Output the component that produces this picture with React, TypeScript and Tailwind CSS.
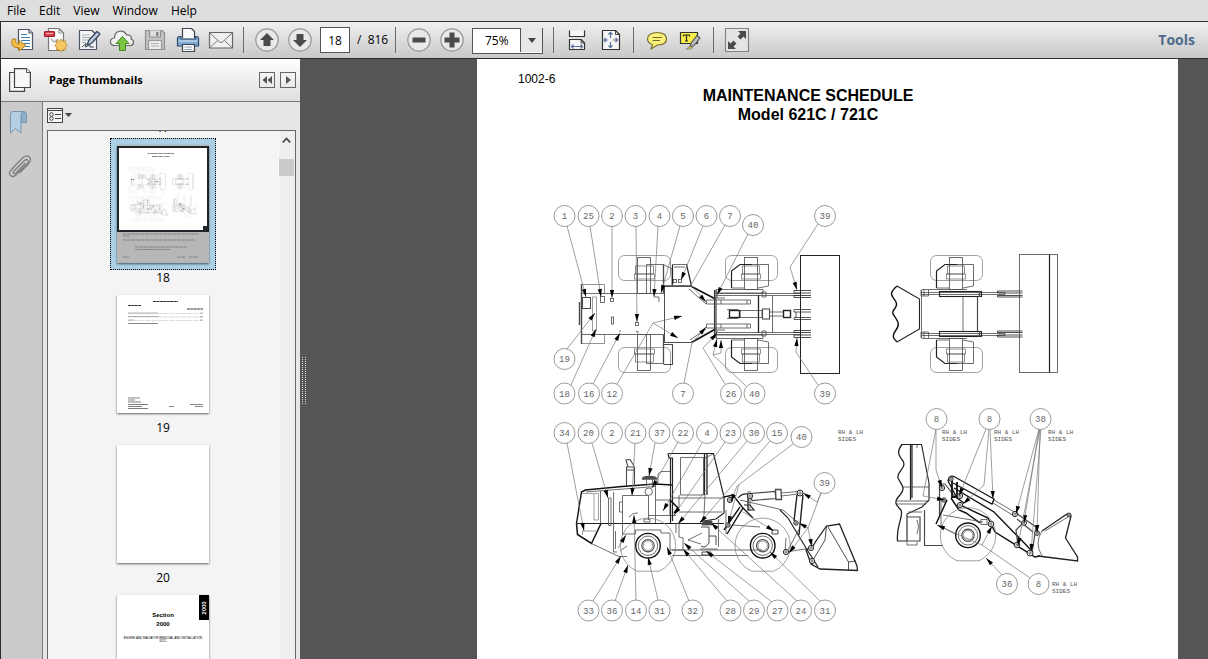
import React from "react";

type Pt = [number, number];

/* ---------- Drawing primitives ---------- */

const pts = (list: Pt[]) => list.map((p) => p.join(",")).join(" ");

/** Thin leader line that ends in a filled arrowhead. */
function Leader({ path, plain = false }: { path: Pt[]; plain?: boolean }) {
  const [x2, y2] = path[path.length - 1];
  const [x1, y1] = path[path.length - 2];
  const len = Math.hypot(x2 - x1, y2 - y1) || 1;
  const ux = (x2 - x1) / len;
  const uy = (y2 - y1) / len;
  const bx = x2 - ux * 8;
  const by = y2 - uy * 8;
  const head: Pt[] = [
    [x2, y2],
    [bx - uy * 2.1, by + ux * 2.1],
    [bx + uy * 2.1, by - ux * 2.1],
  ];
  return (
    <g>
      <polyline points={pts(path)} stroke="#777" strokeWidth={0.7} fill="none" />
      {!plain && <polygon points={pts(head)} fill="#000" stroke="none" />}
    </g>
  );
}

const callouts: [number, number, string][] = [
  [564.5, 216, "1"], [588.5, 216, "25"], [612, 216, "2"], [635.5, 216, "3"], [659.5, 216, "4"],
  [683, 216, "5"], [706.5, 216, "6"], [730, 216, "7"], [753, 225, "40"], [825, 216, "39"],
  [564.5, 359, "19"], [564.5, 393.5, "18"], [589, 393.5, "16"], [612, 393.5, "12"], [683, 393.5, "7"],
  [731, 393.5, "26"], [754.5, 393.5, "40"], [825, 393.5, "39"],
  [564.5, 433, "34"], [588.5, 433, "20"], [612, 433, "2"], [635.5, 433, "21"], [659.5, 433, "37"],
  [683, 433, "22"], [707, 433, "4"], [730.5, 433, "23"], [754, 433, "30"], [777, 433, "15"],
  [801.5, 437, "40"], [824.5, 483, "39"],
  [588.5, 610.5, "33"], [612, 610.5, "36"], [636, 610.5, "14"], [659.5, 610.5, "31"], [692.5, 610.5, "32"],
  [730.5, 610.5, "28"], [754, 610.5, "29"], [777.5, 610.5, "27"], [801, 610.5, "24"], [825, 610.5, "31"],
  [936.5, 419, "8"], [989.5, 419, "8"], [1040.5, 419, "38"], [1007, 584, "36"], [1038.5, 584, "8"],
];

const sideNotes: Pt[] = [
  [838, 434], [942, 434], [994, 434], [1048, 434], [1052, 586],
];

const leaders: Pt[][] = [
  [[567, 226], [586, 297]],
  [[590, 226], [601, 297]],
  [[612, 226], [612, 298]],
  [[636, 226], [637, 322]],
  [[658, 226], [654, 297]],
  [[680, 226], [661, 293]],
  [[703, 226], [681, 280]],
  [[725, 225], [691, 285], [706, 302]],
  [[748, 234], [717, 295]],
  [[818, 224], [790, 267], [797, 290]],
  [[567, 349], [595, 313]],
  [[571, 385], [596, 329]],
  [[593, 384], [620, 333]],
  [[617, 384], [653, 323], [682, 316]],
  [[653, 323], [678, 338]],
  [[684, 383], [692, 343], [706, 327]],
  [[725, 384], [703, 348], [717, 333]],
  [[746, 386], [713, 355], [717, 339]],
  [[713, 355], [721, 353], [721, 340]],
  [[818, 385], [796, 352], [797, 338]],
  [[567, 443], [584, 531]],
  [[592, 443], [608, 498]],
  [[635, 443], [632, 496]],
  [[655, 443], [649, 476]],
  [[678, 442], [652, 488]],
  [[702, 443], [663, 511]],
  [[725, 442], [674, 515]],
  [[747, 441], [678, 524]],
  [[770, 441], [700, 523]],
  [[793, 444], [737, 486], [731, 502]],
  [[739, 485], [728, 524]],
  [[821, 493], [817, 502], [803, 493]],
  [[821, 493], [808, 528], [789, 553]],
  [[808, 528], [799, 523]],
  [[808, 528], [812, 547]],
  [[743, 512], [774, 531]],
  [[593, 601], [621, 556]],
  [[618, 548], [626, 535]],
  [[615, 601], [628, 565]],
  [[636, 600], [634, 515]],
  [[658, 600], [648, 557]],
  [[689, 601], [667, 547]],
  [[727, 601], [683, 549]],
  [[749, 601], [684, 543]],
  [[772, 602], [706, 551]],
  [[797, 601], [711, 523]],
  [[820, 601], [770, 552]],
  [[936, 429], [936, 470], [942, 488]],
  [[936, 429], [923, 496], [945, 500]],
  [[986, 429], [959, 496]],
  [[990, 429], [993, 499]],
  [[989, 429], [984, 485], [963, 504]],
  [[1039, 429], [1016, 514]],
  [[1039, 429], [1024, 523]],
  [[1040, 429], [1037, 533]],
  [[1040, 429], [1018, 546]],
  [[1041, 429], [1031, 552]],
  [[1002, 575], [986, 558]],
  [[1030, 578], [982, 545], [992, 526]],
  [[982, 545], [937, 525]],
];

/** Upper half of the front axle as seen from above; mirrored for the lower half. */
function AxleHalf() {
  return (
    <g>
      <rect x={725.5} y={255.5} width={52} height={25} rx={6} stroke="#888" />
      <rect x={744.5} y={257.5} width={13} height={32} />
      <rect x={742.5} y={266} width={17} height={8} strokeWidth={0.6} />
      <rect x={741.5} y={274} width={19} height={5} strokeWidth={0.6} />
      <path d="M731.5 288V271L740 264.5H752" stroke="#222" strokeWidth={1.2} />
      <path d="M752 264.5H768.5V286L758 288M731.5 288H744" />
    </g>
  );
}

function Mirror({ children }: { children: React.ReactNode }) {
  return <g transform="translate(0 628) scale(1 -1)">{children}</g>;
}

function RearHalf() {
  return (
    <g>
      <rect x={618.5} y={255.5} width={52} height={25} rx={6} stroke="#888" />
      <rect x={637.5} y={257.5} width={13} height={36} />
      <rect x={635.5} y={266} width={18} height={8} strokeWidth={0.6} />
      <rect x={634.5} y={274} width={20} height={5} strokeWidth={0.6} />
      <path d="M646.5 293V264.5H663.5V293" />
      <path d="M663.5 264.5V293" strokeWidth={1.3} />
    </g>
  );
}

function BracketHalf() {
  return (
    <g>
      <path d="M716 289.5H763V293H716Z" />
      <path d="M716 293.5H801M716 295.5H801" />
      <path d="M717 296V298H725M762 292V297H766V292Z" />
      <path d="M811 290.5H794V293H811M811 295.5H794V297.5H811" stroke="#222" />
      <path d="M706.5 300H750.5V304H706.5ZM721 300V304M747 300V304" />
    </g>
  );
}

function TopView() {
  return (
    <g>
      <path d="M581.5 284.5H604.5V293.5M581.5 343.5H604.5V335" stroke="#777" />
      <path d="M581.5 284V344" strokeWidth={1.4} />
      <path d="M579.5 302V325" strokeWidth={1.4} />
      <path d="M581.5 293.5H664.5M581.5 334.5H664.5" />
      <rect x={582.5} y={297.5} width={8} height={11} strokeWidth={1} />
      <rect x={592.5} y={297} width={4} height={34} stroke="#888" />
      <rect x={600.5} y={296.5} width={4} height={6} />
      <rect x={610.5} y={298.5} width={3} height={3} />
      <rect x={611.5} y={317} width={2} height={7} />
      <rect x={635.5} y={322.5} width={3} height={3} />
      <path d="M636 331.5h2v2M619 331h2M654 297H659V302" />
      <RearHalf />
      <Mirror><RearHalf /></Mirror>
      <path d="M663.5 264.5L672 269V285M663.5 285.5H692M672.5 264.5H686.5M674 267H685" />
      <path d="M686.5 264.5L691.5 286M672.5 264.5V285" stroke="#222" strokeWidth={1.2} />
      <path d="M663.5 344.5H672.5V364.5H663.5" strokeWidth={1.1} />
      <rect x={673.5} y={279.5} width={3} height={3} />
      <rect x={678.5} y={279.5} width={3} height={3} />
      <path d="M664.5 286.5H691.5M664.5 342.5H691.5M664.5 286.5V342.5" stroke="#222" />
      <path d="M691.5 286.5L715.5 299M715.5 329L691.5 342.5" stroke="#111" strokeWidth={1.6} />
      <path d="M689 289L706 304M690 340L706 329" />
      <path d="M714.5 290V338M716 290V338" strokeWidth={1.1} stroke="#333" />
      <AxleHalf />
      <Mirror><AxleHalf /></Mirror>
      <BracketHalf />
      <Mirror><BracketHalf /></Mirror>
      <path d="M758.5 295V333" stroke="#222" strokeWidth={1.3} />
      <path d="M772.5 295V333" />
      <rect x={740} y={310.5} width={22} height={7} />
      <rect x={729.5} y={310.5} width={10} height={7} stroke="#222" strokeWidth={1.4} />
      <path d="M727 309.5H738M727 318.5H738" />
      <rect x={762.5} y={309} width={7} height={10} strokeWidth={1.1} />
      <path d="M770 312H783M770 316H783" />
      <rect x={783.5} y={310.5} width={7} height={7} stroke="#222" strokeWidth={1.4} />
      <path d="M811 309.5H794V312H811M811 317.5H794V319.5H811M796 312V317.5" stroke="#333" />
      <rect x={800.5} y={255.5} width={39} height={118} stroke="#222" strokeWidth={1} />
    </g>
  );
}

function FrontArmHalf() {
  return (
    <g>
      <path d="M921.5 289.5H967M921.5 292.5H1005V294.5H921.5" />
      <rect x={939.5} y={291.5} width={42} height={5} stroke="#222" strokeWidth={1.1} />
      <path d="M979.5 291V297" strokeWidth={1.5} />
      <path d="M921 290V296H928.5V290M924 290V296" />
      <path d="M1022.5 291H997.5V293H1022.5M1022.5 295.5H997.5V297H1022.5" stroke="#222" />
    </g>
  );
}

function FrontTopView() {
  return (
    <g>
      <path d="M897 286C887 295 893 296 896 302C899 308 891 309 893 314C897 320 901 324 896 330C891 337 894 339 897 342" stroke="#111" strokeWidth={1.4} />
      <path d="M897 286L919.5 299V329L897 342" stroke="#222" strokeWidth={1.1} />
      <path d="M921.5 290V338M963 297V331" />
      <path d="M977.5 297V331" strokeWidth={1.2} />
      <g transform="translate(205 0)">
        <AxleHalf />
        <Mirror><AxleHalf /></Mirror>
      </g>
      <FrontArmHalf />
      <Mirror><FrontArmHalf /></Mirror>
      <rect x={1019.5} y={254.5} width={38} height={118} />
      <path d="M1049.5 254.5V372.5" stroke="#222" strokeWidth={1.2} />
    </g>
  );
}

function Tyre({ x, y }: { x: number; y: number }) {
  return (
    <g transform={`translate(${x} ${y})`}>
      <path d="M-11 25.5A27.7 27.7 0 1 1 11 25.5Z" stroke="#888" />
      <circle r={12.3} stroke="#111" strokeWidth={1.4} />
      <circle r={9.7} />
      <circle r={6.2} strokeWidth={1.1} />
      <circle r={4.8} strokeWidth={0.6} />
    </g>
  );
}

function Pin({ x, y, r = 2.2 }: { x: number; y: number; r?: number }) {
  return (
    <g>
      <circle cx={x} cy={y} r={r} fill="#fff" stroke="#222" strokeWidth={1} />
      <circle cx={x} cy={y} r={r / 2.5} />
    </g>
  );
}

function SideView() {
  return (
    <g>
      <path d="M576.5 523.5L581.5 492L585.5 490L622 486.5L655 484L672 485" stroke="#111" strokeWidth={1.4} />
      <path d="M586 492L655 486.5" />
      <path d="M576.5 523.5L577.5 534.5L591.5 543.5L601 523.5" stroke="#111" strokeWidth={1.5} />
      <path d="M576.5 523.5H724" stroke="#222" strokeWidth={1.1} />
      <path d="M591.5 543.5L619 556.5H627M600.5 491V523" />
      <path d="M582.5 493.5H598.5V520H594V494M582.5 535V531H596" stroke="#888" />
      <path d="M608.5 498V525.5H611V498ZM613.5 492V552H617M615.5 531V549" />
      <path d="M622.5 535V495.5H648.5V520M619.5 502H622M619.5 502V512H622" />
      <path d="M622.5 534H635.5V530H661V533H670V550H683V538L679 537V523M648.5 515.5H676" />
      <path d="M644 519V522H650V519Z" />
      <path d="M627 546L620 551M629 517Q633 512 638 513" />
      <path d="M626.5 486V467H634.5V486M628 467L626 460L630 459.5L634 466M627 470H634" strokeWidth={1.1} />
      <path d="M642.5 479C642.5 475.5 656.5 475.5 656.5 479Z" fill="#555" strokeWidth={1.3} />
      <path d="M646.5 479.5V484.5H652.5V479.5" />
      <circle cx={648.7} cy={491.7} r={3.7} fill="#fff" />
      <path d="M658 483V474L661 471.5H670M655.5 485V523M655.5 500H670V515" />
      <path d="M668.5 453.5H713.5L724 497V513L716 519L700 521.5" stroke="#222" strokeWidth={1.2} />
      <path d="M668 453.5L669 458H673M670.5 458V523M672.5 458V521" stroke="#222" strokeWidth={1.2} />
      <path d="M680.5 457.5H703.5V495H680.5Z" />
      <path d="M671.5 498H724M679 512H722M679 495V508M705 495L704 515" />
      <path d="M704.5 454V495M707 454V495" stroke="#222" strokeWidth={1.3} />
      <path d="M713 454L705 458" />
      <path d="M670 500L678 508L674 513" stroke="#111" strokeWidth={1.6} />
      <path d="M718.5 519V547M700 549H718M672 550H762M672 555.5H748" />
      <path d="M676 523V533M688 540L702 533M688 540L701 544" />
      <path d="M702 523Q706 519 712 521V525H702Z" fill="#444" />
      <path d="M701 527H709V543Q705 549 701 546M709 536H716M716 536V545M702 552H711V555H702Z" strokeWidth={1} />
      <Tyre x={648} y={545.7} />
      <Tyre x={762.7} y={545.7} />
      <path d="M724 497L733 495L743 508L727 534M740 507L724 530M743 508L753 518" stroke="#111" strokeWidth={1.4} />
      <path d="M726 510V534M733 525L760 527M740 500L783 510L797 522" />
      <path d="M738 498Q742 493 748 494V510H754L750 505H744" stroke="#222" strokeWidth={1.2} />
      <path d="M748 491V511M750 491V511" />
      <path d="M750 493.5L775 491.5L776 498.5L752 500.5Z" fill="#fff" strokeWidth={1.2} />
      <path d="M775.5 489.5H781L781.5 499.5H776Z" fill="#fff" strokeWidth={1.3} />
      <path d="M781.5 493L798 491.5M781.5 496L798 494" />
      <path d="M803 495L799 535M797 495L794 521" stroke="#222" strokeWidth={1.4} />
      <path d="M780 510L788 518L806 548L818 567" stroke="#222" strokeWidth={1.2} />
      <path d="M799 529L788 550M786 538L785 552L812 548" />
      <path d="M813 546L806 550L811 564L820 569L857.5 570.5L857 566L839.5 524L826.5 526L816 541Z" stroke="#222" strokeWidth={1.3} />
      <path d="M826.5 526L825 540L813 560M828 527L848.5 562V570M848.5 562L856 561" stroke="#222" />
      <Pin x={730} y={500} r={2.6} />
      <Pin x={728} y={525} />
      <Pin x={750} y={496} r={2.6} />
      <Pin x={800} y={493} r={3} />
      <Pin x={796} y={523} />
      <Pin x={786} y={552} r={2.6} />
      <Pin x={811} y={548} r={2.6} />
      <Pin x={812} y={561} r={2.6} />
      <rect x={772} y={530} width={6} height={4} rx={1} strokeWidth={1.1} />
    </g>
  );
}

function FrontSideView() {
  return (
    <g>
      <path d="M902 444.5C896 452 899 456 903 461C907 468 896 472 898 478C902 486 906 488 900 495C893 502 896 505 901 510C904 517 896 524 897.5 541" stroke="#222" strokeWidth={1.3} />
      <path d="M901 444.5H921.5L929 483V500L922 507L907 514V541H897" stroke="#222" strokeWidth={1.1} />
      <path d="M910.5 445V500M912 445V498" stroke="#222" strokeWidth={1.2} />
      <path d="M896 501H929M897 504H926M917 445V448M902 487H929M907 542V545H917V542" />
      <path d="M924.5 510V545.5H943M907 517H920V541H907" strokeWidth={1.2} />
      <path d="M917 520Q920 526 917 534M908 512H922" />
      <path d="M939.5 484V515M939.5 484L945 484L955 497" strokeWidth={1.2} />
      <path d="M947 500L936 524M951 498L959 510L966 513L980 523" stroke="#111" strokeWidth={1.5} />
      <path d="M943 515L983 522M944 528L957 535M941 500V527" />
      <path d="M948 481Q949 475 954 476.5L994 499L992 504L953 483" stroke="#111" strokeWidth={1.3} />
      <path d="M994 500L1016 513M993 503L1014 516" />
      <path d="M948 481L957 498L964 503" stroke="#111" strokeWidth={1.3} />
      <path d="M954 488L994 512L1031 550" stroke="#111" strokeWidth={1.4} />
      <path d="M958 504L988 518L995 532L1035 557L1040 556" stroke="#111" strokeWidth={1.4} />
      <path d="M1016 513L1036 527L1032 553M1018 546L1016 530L1024 522M1017 519L1033 532" strokeWidth={1.2} />
      <path d="M1042 531L1067 514L1071 516L1065.5 538L1077.5 557V561L1038 556" stroke="#222" strokeWidth={1.3} />
      <path d="M1042 531Q1034 543 1042 556M1045 531L1068 517" />
      <path d="M952 480V497L957 497V482" stroke="#111" strokeWidth={1.8} />
      <Tyre x={968} y={535.3} />
      <Pin x={942} y={488} r={2.6} />
      <Pin x={944} y={500} />
      <Pin x={951} y={479} />
      <Pin x={960} y={496} r={2.6} />
      <Pin x={960} y={505} r={2.6} />
      <Pin x={991} y={524} r={2.8} />
      <rect x={981} y={519.5} width={6} height={5} />
      <Pin x={1015} y={514} r={2.6} />
      <Pin x={1024} y={523} r={2.4} />
      <Pin x={1037} y={533} r={2.4} />
      <Pin x={1017} y={545} r={2.8} />
      <Pin x={1030} y={553} r={3} />
      <Pin x={1069} y={515} r={2} />
    </g>
  );
}

function LoaderDrawing({ labels = true, className }: { labels?: boolean; className?: string }) {
  return (
    <svg viewBox="518 195 580 440" className={className} role="img" aria-label="Wheel loader maintenance points" fill="none" stroke="#4a4a4a" strokeWidth={0.8}>
      <TopView />
      <FrontTopView />
      <SideView />
      <FrontSideView />
      {leaders.map((p, i) => <Leader key={i} path={p} plain={!labels} />)}
      {callouts.map(([x, y, n], i) => (
        <g key={i}>
          <circle cx={x} cy={y} r={10.5} stroke="#808080" fill="#fff" />
          {labels && (
            <text x={x} y={y + 3} textAnchor="middle" stroke="none" fill="#666" className="font-['Liberation_Mono',monospace] text-[9px]">
              {n}
            </text>
          )}
        </g>
      ))}
      {labels && sideNotes.map(([x, y], i) => (
        <text key={i} stroke="none" fill="#555" className="font-['Liberation_Mono',monospace] text-[6px]">
          <tspan x={x} y={y}>RH &amp; LH</tspan>
          <tspan x={x} y={y + 7}>SIDES</tspan>
        </text>
      ))}
    </svg>
  );
}

/* ---------- Toolbar icons ---------- */

function Icon({ children, size = 26 }: { children: React.ReactNode; size?: number }) {
  return (
    <svg width={size} height={size} viewBox="0 0 26 26" fill="none" stroke="#4b5563" strokeWidth={1.2} strokeLinejoin="round" aria-hidden="true">
      {children}
    </svg>
  );
}

const OpenIcon = () => (
  <Icon>
    <path d="M8.500 2.500H19L22.500 6V22.500H8.500Z" fill="#fdfdfd" />
    <path d="M19 2.500V6H22.500" fill="#ddd" />
    <path d="M11 7.500H17M11 10.500H20M11 13.500H20M11 16.500H20M13 19.500H20" stroke="#3b7fb5" />
    <path d="M2.500 12C0 19 4 21 9 20.500V24L16 18.500L9 13.500V17C6 17 5 15 6 12Z" fill="#f3bd4e" stroke="#b8801b" strokeWidth={1} />
  </Icon>
);
const CreateIcon = () => (
  <Icon>
    <path d="M5.500 1.500H16L20.500 6V23.500H5.500Z" fill="#fafafa" stroke="#777" />
    <path d="M16 1.500V6H20.500M8 12C12 15 10 17 15 12" fill="none" stroke="#999" />
    <rect x={1.500} y={4.500} width={10} height={5} rx={1} fill="#dc3b48" stroke="#9f1d2a" />
    <path d="M3 6.500H10" stroke="#f6a5ab" />
    <path d="M18 12L19.700 14.300L22.500 13.800L22.300 16.600L24.500 18.500L22.300 20.300L22.500 23L19.700 22.700L18 25L16.300 22.700L13.500 23L13.700 20.300L11.500 18.500L13.700 16.600L13.500 13.800L16.300 14.300Z" fill="#f5c662" stroke="#c08a2a" strokeWidth={0.8} />
  </Icon>
);
const SignIcon = () => (
  <Icon>
    <path d="M3.500 3.500H16L20.500 8V22.500H3.500Z" fill="#f6f6f6" />
    <path d="M6 8H14M6 10.500H14M6 13H12M6 15.500H10" stroke="#9aa3ad" strokeWidth={0.9} />
    <path d="M11 18L13 13L21 4.500L24 7L16 16Z" fill="#b8cbe0" stroke="#334155" />
    <path d="M6 20L10 16.500L9.500 20L14 17.500V20H18" stroke="#334155" strokeWidth={1} />
  </Icon>
);
const CloudIcon = () => (
  <Icon>
    <path d="M6 18.500C0 18.500 0 11.500 5.500 11C5.500 3 15 2 17.500 8C22 7 23 11 22 12C26 13.500 25 18.500 21 18.500Z" fill="#f1f1f1" stroke="#666" />
    <path d="M13.500 9.500L20 16.500H16.500V23.500H10.500V16.500H7Z" fill="#7cc442" stroke="#3f8a1c" strokeWidth={1} />
  </Icon>
);
const SaveIcon = () => (
  <Icon>
    <path d="M3.500 3.500H20L22.500 6V22.500H3.500Z" fill="#c3c3c3" stroke="#8f8f8f" />
    <path d="M7.500 3.500V10H18.500V3.500" fill="#dedede" stroke="#8f8f8f" />
    <rect x={14} y={5} width={2.500} height={4} fill="#888" stroke="none" />
    <path d="M6.500 22V13.500H19.500V22" fill="#ececec" stroke="#999" />
    <path d="M9 16.500H17M9 19H17" stroke="#aaa" strokeWidth={0.9} />
  </Icon>
);
const PrintIcon = () => (
  <Icon>
    <path d="M7.500 11V1.500H16.500L19.500 4.500V11" fill="#fafafa" stroke="#3c4654" />
    <path d="M2.500 11.500Q2.500 9.500 4.500 9.500H6V12H20.500V9.500H22Q23.500 9.500 23.500 11.500V19H2.500Z" fill="#7fa8d2" stroke="#2f4a68" />
    <path d="M3.500 14H22.500" stroke="#c9dcf0" />
    <path d="M7.500 17.500H19.500V24.500H7.500Z" fill="#fafafa" stroke="#3c4654" />
    <path d="M9.500 20H17M9.500 22.500H17" stroke="#8996a5" strokeWidth={0.9} />
  </Icon>
);
const MailIcon = () => (
  <Icon>
    <rect x={1.500} y={5.500} width={23} height={15.500} fill="#f0f0f0" stroke="#666" />
    <path d="M2 6L11.500 15Q13 16 14.500 15L24 6M2 20.500L9.500 13.500M24 20.500L16.500 13.500" stroke="#777" strokeWidth={1} />
  </Icon>
);
const Round = ({ children }: { children: React.ReactNode }) => (
  <Icon>
    <circle cx={13} cy={13} r={11.200} fill="#e9e9e9" stroke="#969696" />
    <g fill="#4b4b4b" stroke="none">{children}</g>
  </Icon>
);
const UpIcon = () => <Round><path d="M13 6L20 13H16.500V19H9.500V13H6Z" /></Round>;
const DownIcon = () => <Round><path d="M13 20L20 13H16.500V7H9.500V13H6Z" /></Round>;
const MinusIcon = () => <Round><rect x={6.500} y={10.500} width={13} height={5} rx={0.500} /></Round>;
const PlusIcon = () => <Round><path d="M10.500 5.500H15.500V10.500H20.500V15.500H15.500V20.500H10.500V15.500H5.500V10.500H10.500Z" /></Round>;
const FitWidthIcon = () => (
  <Icon>
    <path d="M5.500 3.500V9.500H20.500V3.500" fill="#f6f6f6" stroke="#333" />
    <path d="M5.500 22.500V12.500H17L20.500 16V22.500Z" fill="#f6f6f6" stroke="#333" />
    <path d="M17 12.500V16H20.500" stroke="#333" strokeWidth={0.900} />
    <path d="M7.500 19.500H18.500M9.500 17.500L7.500 19.500L9.500 21.500M16.500 17.500L18.500 19.500L16.500 21.500" stroke="#5b7398" />
  </Icon>
);
const FitPageIcon = () => (
  <Icon>
    <path d="M5.500 3.500H18.500L22.500 7.500V22.500H5.500Z" fill="#f6f6f6" stroke="#333" />
    <path d="M18.500 3.500V7.500H22.500" stroke="#333" strokeWidth={0.900} />
    <path d="M13.500 11V5.500M11.500 7.500L13.500 5.500L15.500 7.500M13.500 15V20.500M11.500 18.500L13.500 20.500L15.500 18.500M11 13H7M9 11L7 13L9 15M16 13H20.500M18.500 11L20.500 13L18.500 15" stroke="#5b7398" />
  </Icon>
);
const NoteIcon = () => (
  <Icon>
    <path d="M13 5.500C19 5.500 22.500 8 22.500 12C22.500 16 18.500 18 13.500 18L7 22L8.500 17.500C5 16.500 3.500 14.500 3.500 12C3.500 8 7.500 5.500 13 5.500Z" fill="#fbf07a" stroke="#7a6f35" />
    <path d="M8.500 10.500H18M8.500 13.500H16" stroke="#776b2a" strokeWidth={1} />
  </Icon>
);
const HighlightIcon = () => (
  <Icon>
    <rect x={3.500} y={5.500} width={17} height={11} fill="#fbf04a" stroke="#333" />
    <path d="M6.500 9.500V8H12.500V9.500M9.500 8V14M8 14H11" stroke="#222" />
    <path d="M13 20L14 16L20 8.500L23 11L17 18.500Z" fill="#bdbdbd" stroke="#555" />
    <path d="M9 22L13 19.500L16 20.500L13 22Z" fill="#e9dd30" stroke="#777" strokeWidth={0.800} />
  </Icon>
);
const FullScreenIcon = () => (
  <Icon>
    <rect x={1.500} y={1.500} width={23} height={23} fill="#e4e4e4" stroke="#858585" />
    <path d="M14 4H22V12L19.500 9.500L16.500 12.500L13.500 9.500L16.500 6.500ZM12 22H4V14L6.500 16.500L9.500 13.500L12.500 16.500L9.500 19.500Z" fill="#4b4b4b" stroke="none" />
  </Icon>
);

function ToolButton({ label, children }: { label: string; children: React.ReactNode }) {
  return (
    <button type="button" aria-label={label} className="flex h-8 w-[33px] shrink-0 items-center justify-center hover:bg-white/40">
      {children}
    </button>
  );
}

const Divider = ({ className = "ml-[6px]" }: { className?: string }) => (
  <div className={`${className} mr-[6px] h-[26px] w-px shrink-0 bg-[#6a6a6a]`} />
);

function Toolbar() {
  return (
    <div className="flex h-9 shrink-0 items-center border-l border-[#2b2b30] bg-linear-to-b from-[#f0f0f0] to-[#c9c9c9] pl-[5px]">
      <ToolButton label="Open"><OpenIcon /></ToolButton>
      <ToolButton label="Create PDF"><CreateIcon /></ToolButton>
      <ToolButton label="Sign"><SignIcon /></ToolButton>
      <ToolButton label="Upload"><CloudIcon /></ToolButton>
      <ToolButton label="Save"><SaveIcon /></ToolButton>
      <ToolButton label="Print"><PrintIcon /></ToolButton>
      <ToolButton label="Email"><MailIcon /></ToolButton>
      <Divider />
      <ToolButton label="Previous page"><UpIcon /></ToolButton>
      <ToolButton label="Next page"><DownIcon /></ToolButton>
      <input aria-label="Page number" defaultValue="18" className="ml-1 h-[26px] w-[30px] shrink-0 border border-[#555] bg-white text-center text-xs text-black" />
      <span className="ml-[7px] w-[38px] shrink-0 text-xs whitespace-pre">/  816</span>
      <Divider className="ml-0" />
      <ToolButton label="Zoom out"><MinusIcon /></ToolButton>
      <ToolButton label="Zoom in"><PlusIcon /></ToolButton>
      <div className="relative ml-1 h-[26px] w-[71px] shrink-0">
        <select aria-label="Zoom level" defaultValue="75%" className="size-full appearance-none border border-[#555] bg-white pl-3 text-xs text-black">
          <option>50%</option>
          <option>75%</option>
          <option>100%</option>
        </select>
        <span className="pointer-events-none absolute inset-y-px right-px flex w-[22px] items-center justify-center border-l border-[#555] bg-[#e8e8e8]">
          <svg width="8" height="5" viewBox="0 0 8 5" fill="#444" aria-hidden="true"><path d="M0 0H8L4 5Z" /></svg>
        </span>
      </div>
      <Divider className="ml-[10px]" />
      <ToolButton label="Fit width"><FitWidthIcon /></ToolButton>
      <ToolButton label="Fit page"><FitPageIcon /></ToolButton>
      <Divider className="ml-[7px]" />
      <ToolButton label="Add note"><NoteIcon /></ToolButton>
      <ToolButton label="Highlight text"><HighlightIcon /></ToolButton>
      <Divider className="ml-[7px]" />
      <ToolButton label="Read mode"><FullScreenIcon /></ToolButton>
      <button type="button" className="mr-[13px] ml-auto text-sm font-bold text-[#4f6a8c]">Tools</button>
    </div>
  );
}

/* ---------- Thumbnails ---------- */

function Thumb({ page, selected = false, children }: { page: number; selected?: boolean; children?: React.ReactNode }) {
  return (
    <li className="flex shrink-0 flex-col items-center">
      <button
        type="button"
        aria-label={`Go to page ${page}`}
        className={selected ? "border border-dotted border-black bg-[#abcfe4] p-[6px]" : "border border-transparent p-[6px]"}
      >
        <span className="relative block h-[118px] w-[92px] bg-white text-black shadow-[0_1px_2px_rgba(0,0,0,0.6)]">{children}</span>
      </button>
      <span className="h-4 text-xs leading-4">{page}</span>
    </li>
  );
}

function CurrentPageThumb() {
  return (
    <span className="flex h-full flex-col bg-[#b7b7b7]">
      <span className="relative mt-px flex h-[86px] shrink-0 flex-col border-2 border-[#20242b] bg-white pt-1 font-['Liberation_Sans',sans-serif]">
        <span className="pr-1 text-center text-[2px] leading-[3px] font-bold">MAINTENANCE SCHEDULE<br />Model 621C / 721C</span>
        <LoaderDrawing labels={false} className="ml-1 mt-2 w-[76px] opacity-70" />
        <span className="absolute -right-0.5 -bottom-0.5 size-[6px] bg-[#20242b]" />
      </span>
      <svg viewBox="0 0 92 31" className="w-full" stroke="#777" strokeWidth="0.800" strokeDasharray="3 0.6 5 0.4" aria-hidden="true">
        <path d="M6 2H82M6 4H12M6 8H78M18 15H70M18 17.500H53M6 25H12M60 25H68M72 25H81" />
      </svg>
    </span>
  );
}

function IndexThumb() {
  return (
    <svg viewBox="0 0 92 118" className="size-full" stroke="#999" strokeWidth="0.700" aria-hidden="true">
      <path d="M36 6.500H61M11 10.500H24M70 14H86" stroke="#333" strokeWidth="1.200" strokeDasharray="3 0.400" />
      <path d="M11 18H41M83 18H86M11 21.500H42M83 21.500H86M11 25H17M83 25H86" />
      <path d="M11 18.500H86M11 22H86M11 25.500H86" strokeDasharray="0.500 0.700" />
      <path d="M11 28.500H41M11 103H23M11 105H18M52 111.500H57M73 109.500H86M78 111.500H86" stroke="#555" />
      <path d="M11 107H24M11 109.500H31M11 111.500H25M11 113.500H31" stroke="#444" />
    </svg>
  );
}

function SectionThumb() {
  return (
    <span className="block pt-4 text-center font-['Liberation_Sans',sans-serif] font-bold">
      <span className="block text-[6px] leading-[9px]">Section<br />2000</span>
      <span className="mt-2 block text-[3px] leading-[3px] font-normal whitespace-nowrap">ENGINE AND RADIATOR REMOVAL AND INSTALLATION<br />621C</span>
      <span className="absolute top-0 right-0 flex h-[25px] w-[10px] items-center justify-center bg-black">
        <span className="-rotate-90 text-[6px] leading-none text-white">2000</span>
      </span>
    </span>
  );
}

function ThumbnailPanel() {
  return (
    <aside className="flex w-[300px] shrink-0 flex-col border-l border-[#2b2b30] bg-[#e6e6e6]">
      <header className="flex h-[43px] shrink-0 items-center border-b border-[#777] bg-linear-to-b from-white to-[#dedede]">
        <button type="button" aria-label="Page thumbnails" className="flex w-[42px] justify-start pl-2">
          <svg width="22" height="24" viewBox="0 0 22 24" fill="#f8f8f8" stroke="#444" strokeWidth="1.200" aria-hidden="true">
            <path d="M0.600 4.500H15.500V23.400H0.600Z" />
            <path d="M5.500 0.600H17.500L21.400 4.500V19.500H5.500Z" />
            <path d="M17.500 0.600V4.500H21.400" strokeWidth="0.900" />
          </svg>
        </button>
        <h2 className="ml-[6px] text-[11px] font-bold">Page Thumbnails</h2>
        <button type="button" aria-label="Collapse panel" className="mr-[5px] ml-auto flex size-4 items-center justify-center border border-[#666]">
          <svg width="10" height="8" viewBox="0 0 10 8" fill="#555" aria-hidden="true"><path d="M5 0V8L0.500 4ZM10 0V8L5.500 4Z" /></svg>
        </button>
        <button type="button" aria-label="Expand panel" className="mr-1 flex size-4 items-center justify-center border border-[#666]">
          <svg width="5" height="8" viewBox="0 0 5 8" fill="#555" aria-hidden="true"><path d="M0 0V8L5 4Z" /></svg>
        </button>
      </header>
      <div className="flex min-h-0 flex-1">
        <nav aria-label="Panels" className="flex w-[42px] shrink-0 flex-col items-start gap-5 border-r border-[#777] bg-[#cbcbcb] pt-2 pl-[7px]">
          <button type="button" aria-label="Bookmarks">
            <svg width="20" height="24" viewBox="0 0 20 24" stroke="#7893ae" strokeWidth="1" aria-hidden="true">
              <path d="M5 1.500H15.500Q18.500 1.500 18.500 5V12.500H13V5" fill="#8fb0cd" />
              <path d="M5 1.500Q2.500 1.500 2.500 4.500V23L7.500 18.500L13 23V5Q13 1.500 16 1.500Z" fill="#b5cfe5" />
            </svg>
          </button>
          <button type="button" aria-label="Attachments">
            <svg width="24" height="24" viewBox="0 0 24 24" fill="none" stroke="#808080" strokeWidth="1.300" strokeLinecap="round" aria-hidden="true">
              <path d="M6 17L16.500 6.500Q19 4.500 20 6.500Q21 8 19 10L8.500 20.500Q5 24 2.500 21.500Q0 19 3.500 15.500L14 4.500Q18.500 0 21.500 3Q24 6 20 10.500L12 18.500M6 17Q4.500 19 6 19.500Q7 20 8.500 18.500L17 9.500" />
            </svg>
          </button>
        </nav>
        <div className="flex min-w-0 flex-1 flex-col px-1">
          <div className="flex h-7 shrink-0 items-center pb-0.5">
            <button type="button" aria-label="Thumbnail options" className="flex items-center gap-0.5">
              <svg width="16" height="15" viewBox="0 0 16 15" fill="none" stroke="#444" aria-hidden="true">
                <rect x="0.500" y="0.500" width="15" height="14" fill="#f4f4f4" />
                <path d="M1 2.500H15M8 6.500H14M8 10.500H14" />
                <circle cx="4.500" cy="6.500" r="1.800" /><circle cx="4.500" cy="10.500" r="1.800" />
              </svg>
              <svg width="7" height="4" viewBox="0 0 7 4" fill="#444" aria-hidden="true"><path d="M0 0H7L3.500 4Z" /></svg>
            </button>
          </div>
          <div className="flex min-h-0 flex-1 overflow-hidden border-x border-t border-[#666] bg-[#f4f4f4]">
            <ul className="-mt-[11px] flex min-w-0 flex-1 flex-col gap-0.5">
              <li className="h-4 shrink-0 text-center text-xs leading-4">17</li>
              <Thumb page={18} selected><CurrentPageThumb /></Thumb>
              <Thumb page={19}><IndexThumb /></Thumb>
              <Thumb page={20} />
              <Thumb page={21}><SectionThumb /></Thumb>
            </ul>
            <div className="flex w-[17px] shrink-0 flex-col items-center border-l border-[#fafafa] bg-[#efefef] pr-px">
              <svg width="9" height="28" viewBox="0 0 9 28" fill="none" stroke="#444" strokeWidth="1.800" className="shrink-0" aria-hidden="true">
                <path d="M0.800 11.500L4.500 7.500L8.200 11.500" />
              </svg>
              <div className="h-[17px] w-full shrink-0 bg-[#cbcbcb]" />
            </div>
          </div>
        </div>
      </div>
    </aside>
  );
}

/* ---------- Page ---------- */

export default function App() {
  return (
    <div className="flex h-screen flex-col overflow-hidden bg-[#555] font-['Open_Sans','Noto_Sans',sans-serif] text-black">
      <nav aria-label="Menu bar" className="flex h-[21px] shrink-0 items-center gap-[13px] bg-[#dedede] pl-[7px] text-xs">
        <button type="button">File</button>
        <button type="button">Edit</button>
        <button type="button">View</button>
        <button type="button">Window</button>
        <button type="button">Help</button>
      </nav>
      <div className="border-y border-[#2b2b30]"><Toolbar /></div>
      <div className="flex min-h-0 flex-1">
        <ThumbnailPanel />
        <div className="flex w-[6px] shrink-0 items-center pl-[2px]" role="separator" aria-orientation="vertical" aria-label="Resize panel">
          <svg width="4" height="48" aria-hidden="true" className="mt-11">
            <path d="M0.500 0V48M3.500 0V48" stroke="#d8d8d8" strokeDasharray="1 1" />
          </svg>
        </div>
        <main className="min-w-0 flex-1 overflow-hidden pr-[30px]">
          <article className="ml-auto min-h-full w-full max-w-[701px] bg-white pt-[14px] pr-20 pl-[41px] font-['Liberation_Sans',sans-serif]">
            <p className="text-xs leading-[13px]">1002-6</p>
            <h1 className="text-center text-base leading-[19px] font-bold">MAINTENANCE SCHEDULE<br />Model 621C / 721C</h1>
            <LoaderDrawing className="mt-[71px] w-full" />
          </article>
        </main>
      </div>
    </div>
  );
}
